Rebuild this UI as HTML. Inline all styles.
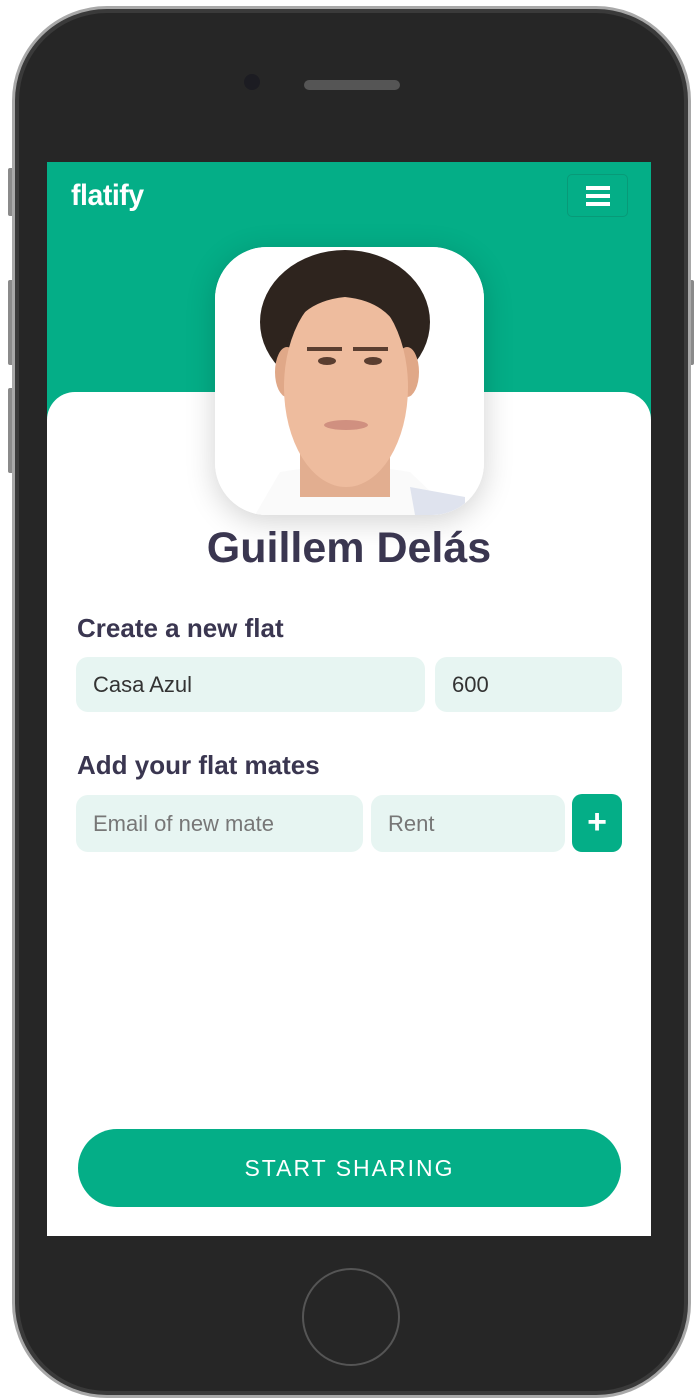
<!DOCTYPE html>
<html><head><meta charset="utf-8"><style>
*{margin:0;padding:0;box-sizing:border-box}
body{width:697px;height:1400px;background:#fff;position:relative;overflow:hidden;font-family:"Liberation Sans",sans-serif}
.phone{position:absolute;left:12px;top:6px;width:679px;height:1392px;border-radius:95px;background:#262626;border:3px solid #a8a8a8;box-shadow:inset 0 0 0 4px #3a3a3a}
.btn{position:absolute;background:#8a8a8a;width:6px;border-radius:2px}
.screen{position:absolute;left:47px;top:162px;width:604px;height:1074px;background:#fff;overflow:hidden}
.top{position:absolute;left:0;top:0;width:604px;height:270px;background:#04ae87}
.card{position:absolute;left:0;top:230px;width:604px;height:900px;background:#fff;border-radius:28px 28px 0 0}
.logo{position:absolute;left:24px;top:17px;color:#fff;font-size:30px;font-weight:bold;letter-spacing:-0.5px;transform:scaleX(.95);transform-origin:left}
.menu{position:absolute;left:520px;top:12px;width:61px;height:43px;border:1px solid #089a78;border-radius:5px}
.menu i{position:absolute;left:18px;width:24px;height:4px;background:#fff}
.photo{position:absolute;left:168px;top:85px;width:269px;height:268px;border-radius:52px;overflow:hidden;box-shadow:0 6px 30px rgba(0,0,0,.18);background:#fff}
.name{position:absolute;left:0;width:604px;top:362px;text-align:center;font-size:43px;font-weight:bold;color:#3a3650}
h3{position:absolute;left:30px;font-size:26px;font-weight:bold;color:#3a3650}
.in{position:absolute;background:#e7f5f2;border-radius:12px;font-size:22px;color:#333;padding-left:17px;display:flex;align-items:center}
.ph{color:#777}
.plus{position:absolute;left:525px;top:632px;width:50px;height:58px;background:#04ae87;border-radius:10px;color:#fff;font-size:34px;font-weight:bold;text-align:center;line-height:56px}
.start{position:absolute;left:31px;top:967px;width:543px;height:78px;border-radius:39px;background:#04ae87;color:#fff;font-size:23px;letter-spacing:2px;text-align:center;line-height:78px}
</style></head><body>
<div class="btn" style="left:8px;top:168px;height:48px"></div>
<div class="btn" style="left:8px;top:280px;height:85px"></div>
<div class="btn" style="left:8px;top:388px;height:85px"></div>
<div class="btn" style="left:688px;top:280px;height:85px"></div>
<div class="phone"></div>
<div style="position:absolute;left:244px;top:74px;width:16px;height:16px;border-radius:50%;background:#1c1c22"></div>
<div style="position:absolute;left:304px;top:80px;width:96px;height:10px;border-radius:5px;background:#555"></div>
<div style="position:absolute;left:302px;top:1268px;width:98px;height:98px;border-radius:50%;border:2px solid #555"></div>
<div class="screen">
<div class="top"></div>
<div class="card"></div>
<div class="logo">flatify</div>
<div class="menu"><i style="top:11px"></i><i style="top:19px"></i><i style="top:27px"></i></div>
<div class="photo"><svg width="269" height="268">
<rect width="269" height="268" fill="#fff"/>
<path d="M40 268 L65 225 L130 215 L195 225 L240 268Z" fill="#fafafa"/>
<path d="M195 240 L250 250 L250 268 L200 268Z" fill="#dfe3ee"/>
<rect x="85" y="170" width="90" height="80" fill="#e2ae90"/>
<ellipse cx="130" cy="75" rx="85" ry="72" fill="#2e241e"/>
<ellipse cx="72" cy="125" rx="12" ry="25" fill="#e0a888"/>
<ellipse cx="192" cy="125" rx="12" ry="25" fill="#e0a888"/>
<ellipse cx="131" cy="140" rx="62" ry="100" fill="#eebc9e"/>
<path d="M70 100 Q80 55 130 50 Q180 55 190 100 L190 30 L70 30Z" fill="#2e241e"/>
<rect x="92" y="100" width="35" height="4" fill="#5a3e30"/><rect x="138" y="100" width="35" height="4" fill="#5a3e30"/>
<ellipse cx="112" cy="114" rx="9" ry="4" fill="#5a3e30"/><ellipse cx="158" cy="114" rx="9" ry="4" fill="#5a3e30"/>
<ellipse cx="131" cy="178" rx="22" ry="5" fill="#d09080"/>
</svg></div>
<div class="name">Guillem Delás</div>
<h3 style="top:451px">Create a new flat</h3>
<div class="in" style="left:29px;top:495px;width:349px;height:55px">Casa Azul</div>
<div class="in" style="left:388px;top:495px;width:187px;height:55px">600</div>
<h3 style="top:588px">Add your flat mates</h3>
<div class="in ph" style="left:29px;top:633px;width:287px;height:57px">Email of new mate</div>
<div class="in ph" style="left:324px;top:633px;width:194px;height:57px">Rent</div>
<div class="plus">+</div>
<div class="start">START SHARING</div>
</div>
</body></html>
